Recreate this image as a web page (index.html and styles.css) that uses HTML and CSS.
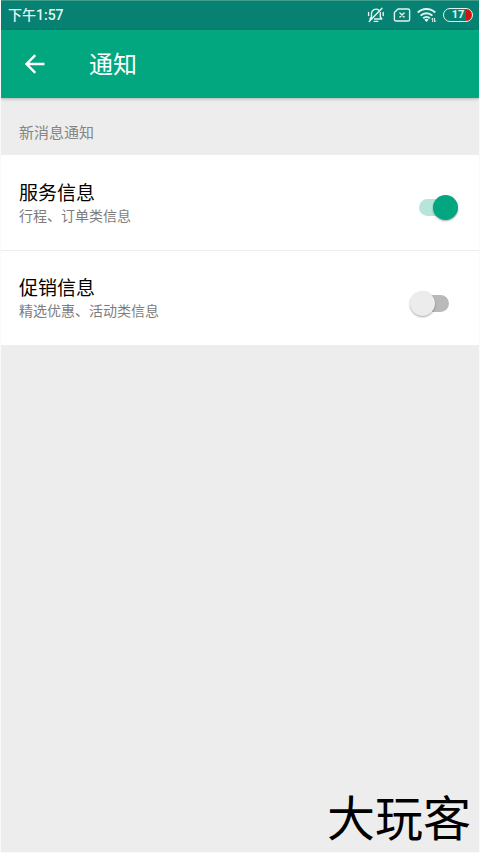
FILE: index.html
```html
<!DOCTYPE html>
<html lang="zh-CN">
<head>
<meta charset="utf-8">
<meta name="viewport" content="width=device-width, initial-scale=1">
<title>通知</title>
<link rel="stylesheet" href="styles.css">
</head>
<body>
<div class="status">
  <span class="time">下午1:57</span>
  <div class="status-icons">
    <svg width="20" height="18" viewBox="0 0 20 18" fill="none" stroke="currentColor" stroke-width="1.4" stroke-linecap="round" stroke-linejoin="round">
      <path d="M4.5 11V7.5a4.5 4.5 0 0 1 7-3.6M13.3 6.5V11l1.5 2H7.5M3 13l1.5-2M7.2 15.4h3.6M2.2 15.6 15 2.2M1.6 6.5v3M16.2 6.5v3"/>
    </svg>
    <svg width="18" height="14" viewBox="0 0 18 14" fill="none" stroke="currentColor" stroke-width="1.4" stroke-linecap="round" stroke-linejoin="round">
      <path d="M5 1h10a1.6 1.6 0 0 1 1.6 1.6v8.8A1.6 1.6 0 0 1 15 13H3a1.6 1.6 0 0 1-1.6-1.6V4.6ZM6.9 4.9l4.2 4.2M11.1 4.9 6.9 9.1"/>
    </svg>
    <svg width="20" height="16" viewBox="0 0 20 16" fill="none" stroke="currentColor" stroke-width="2">
      <path d="M.8 5.5a12.4 12.4 0 0 1 17.4 0M3.6 8.6a8.4 8.4 0 0 1 11.8 0M6.2 11.3a4.8 4.8 0 0 1 6.6 0"/>
      <path d="m7.3 12.8 2.2 2.2 2.2-2.2a3.2 3.2 0 0 0-4.4 0Z" fill="currentColor" stroke="none"/>
      <path d="M15.7 15v-4l-1.2 1.3M17.6 11v4l1.2-1.3" stroke-width="1"/>
    </svg>
    <span class="battery">17</span>
  </div>
</div>
<header class="bar">
  <button class="back" type="button" aria-label="返回">
    <svg width="22" height="20" viewBox="0 0 22 20" fill="none" stroke="currentColor" stroke-width="2.4">
      <path d="M20.4 10H3M11.3 1.2 2.5 10l8.8 8.8"/>
    </svg>
  </button>
  <h1>通知</h1>
</header>
<main>
  <h2>新消息通知</h2>
  <label class="row" for="service">
    <span class="copy"><span class="name">服务信息</span><span class="note">行程、订单类信息</span></span>
    <input class="switch" id="service" type="checkbox" role="switch" checked>
  </label>
  <label class="row" for="promo">
    <span class="copy"><span class="name">促销信息</span><span class="note">精选优惠、活动类信息</span></span>
    <input class="switch" id="promo" type="checkbox" role="switch">
  </label>
</main>
<footer>大玩客</footer>
</body>
</html>
```
FILE: styles.css
```css
* { box-sizing: border-box; }
body {
  margin: 0;
  min-height: 100vh;
  display: flex;
  flex-direction: column;
  background: #ededed;
  border: solid #fafafa;
  border-width: 0 1px 1px;
  font-family: Roboto, "Noto Sans CJK SC", sans-serif;
  color: #000;
}
h1, h2 { margin: 0; font-weight: 400; }
.status {
  display: flex;
  align-items: center;
  justify-content: space-between;
  height: 30px;
  padding: 0 6px 2px 7px;
  border-top: 1px solid #3f9d8c;
  background: #078172;
  color: #e4f5f1;
}
.time { font-size: 14px; font-weight: 500; line-height: 20px; }
.status-icons { display: flex; align-items: center; gap: 6px; }
.battery {
  width: 30px;
  height: 14px;
  border: 1px solid #e4f5f1;
  border-radius: 7px;
  background: linear-gradient(90deg, transparent 22px, #d5120c 22px) padding-box;
  font-size: 11px;
  font-weight: 700;
  line-height: 12px;
  text-align: center;
}
.bar {
  display: flex;
  align-items: center;
  height: 68px;
  padding: 0 23px;
  gap: 43px;
  background: #02a67f;
  color: #fff;
  box-shadow: 0 1px 3px #00000040;
}
.back { display: flex; padding: 0; border: 0; background: none; color: inherit; }
h1 { padding-top: 2px; font-size: 24px; line-height: 32px; }
h2 { padding: 25px 18px 11px; font-size: 15px; line-height: 21px; color: #858585; }
.row {
  display: flex;
  align-items: center;
  justify-content: space-between;
  height: 95px;
  padding: 0 20px 0 18px;
  background: #fff;
}
.row + .row { border-top: 1px solid #ececec; }
.copy { display: flex; flex-direction: column; padding-top: 2px; }
.name { font-size: 19px; line-height: 24px; }
.note { font-size: 14px; line-height: 20px; color: #7d7d7d; }
.switch {
  appearance: none;
  position: relative;
  display: flex;
  align-items: center;
  width: 50px;
  height: 27px;
  margin: 10px 0 0;
}
.switch::before {
  content: "";
  width: 30px;
  height: 17px;
  margin-left: 10px;
  border-radius: 9px;
  background: #b9b9b9;
}
.switch::after {
  content: "";
  position: absolute;
  top: 1px;
  left: 1px;
  width: 25px;
  height: 25px;
  border-radius: 50%;
  background: #ececec;
  box-shadow: 0 1px 2px #00000059;
}
.switch:checked::before { background: #b5e6d9; }
.switch:checked::after { left: 24px; background: #02a67f; }
footer {
  margin-top: auto;
  padding: 0 8px 9px;
  font-family: "Noto Sans CJK SC", sans-serif;
  font-size: 48px;
  font-weight: 400;
  line-height: 56px;
  text-align: right;
}
```
